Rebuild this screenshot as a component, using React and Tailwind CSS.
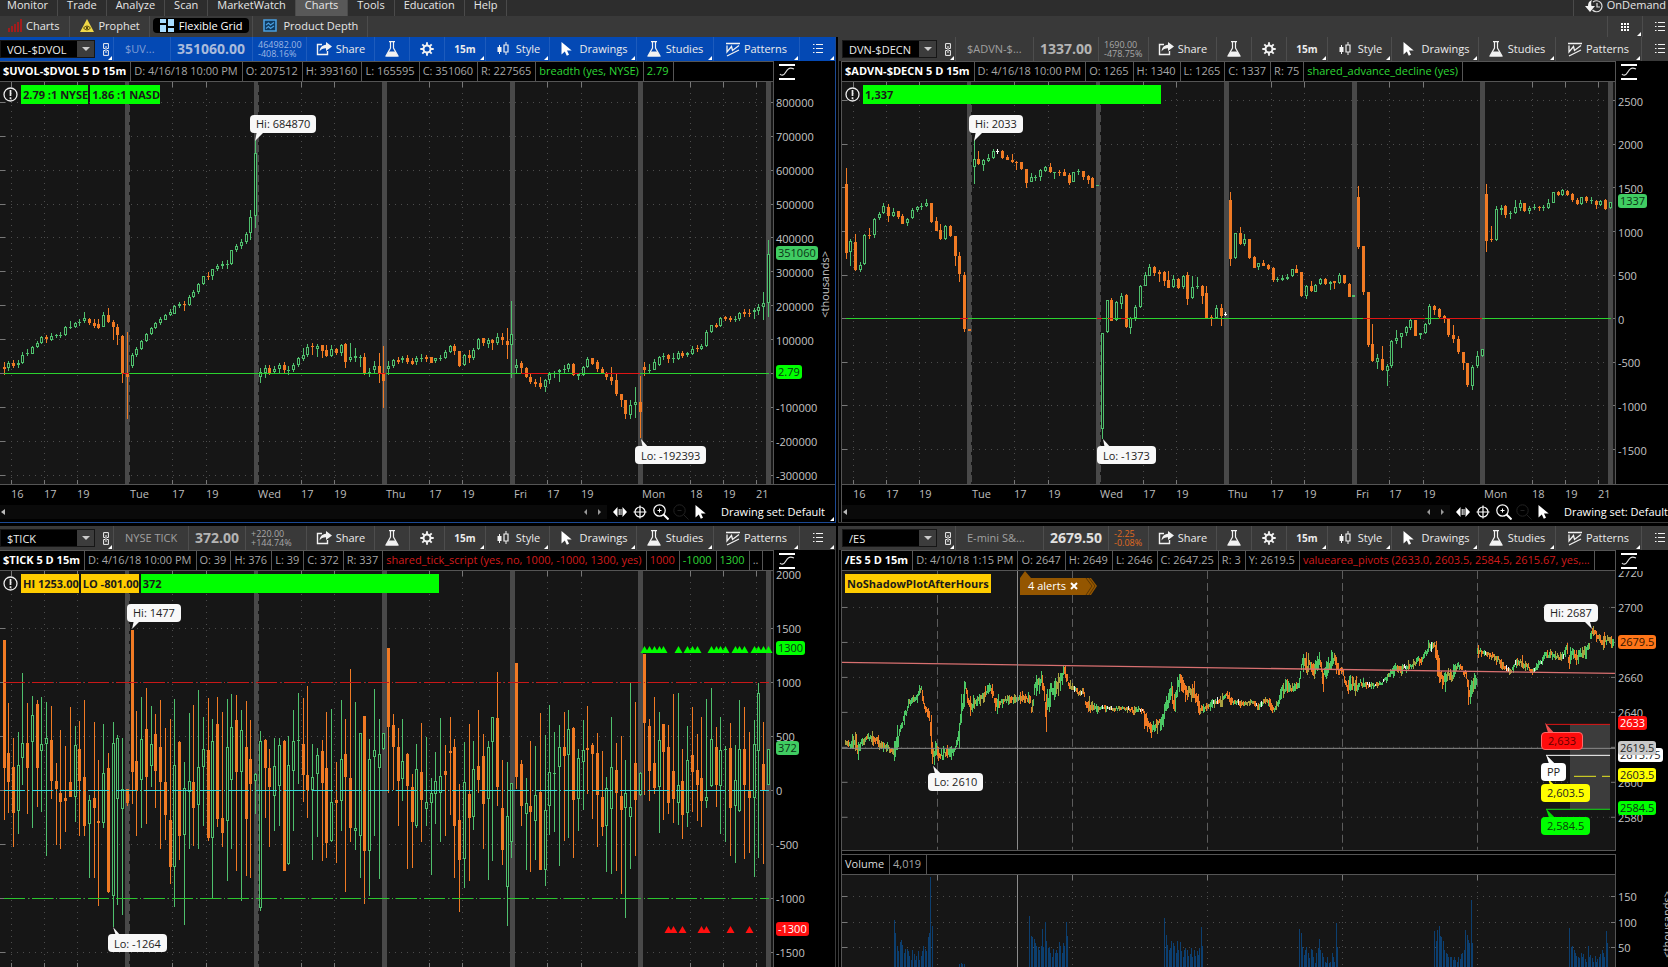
import React from 'react';

const UP = '#4fc06d';
const DOWN = '#f07a24';
const GRID = '#4c4c4c';
const CHART_W = 773;

/* ---------- Candle data ---------- */
// One candle per entry: direction, then high, body top, body bottom, low.
// Levels are measured downwards, three units to a pixel.

const UVOL = `
d 846 863 867 885,u 843 850 866 875,d 840 850 858 865,u 842 850 857 865,u 816 825 850 852,u 808 819 823 830,u 799 801 823 824,u 785 789 801 806,u 768 773 791 794,
d 766 773 779 790,u 760 768 780 783,u 762 766 768 776,u 757 766 768 775,u 738 741 766 770,u 723 741 743 749,u 726 730 743 746,u 717 726 730 738,u 697 716 724 729,
d 714 717 731 737,d 718 730 740 744,d 719 734 744 749,u 697 705 742 743,d 684 705 727 729,d 722 726 743 781,d 732 743 767 795,d 766 770 879 911,d 756 879 893 1017,
u 820 826 860 866,u 802 808 826 832,u 781 784 808 812,u 760 763 784 786,u 742 746 763 765,u 727 730 746 749,u 712 717 731 735,u 702 705 720 722,u 687 697 706 710,
u 677 680 702 704,u 667 673 680 686,d 663 673 677 695,u 647 651 677 678,u 631 636 653 656,u 610 613 637 644,u 588 590 613 617,d 578 588 591 602,u 567 569 590 600,
u 553 559 568 573,u 543 552 558 567,u 541 552 554 567,u 510 512 553 555,u 492 499 512 518,u 478 488 499 509,u 457 462 487 494,u 390 412 461 480,u 180 220 410 446,
u 866 878 893 911,u 855 864 880 894,d 855 865 880 887,u 860 868 878 882,u 849 856 868 880,d 847 856 872 880,u 858 870 872 886,u 850 856 870 876,u 832 836 856 863,
u 804 826 838 843,u 793 802 826 833,d 790 799 803 826,u 793 798 808 832,d 795 796 815 836,d 797 810 830 832,u 796 808 830 831,d 805 808 821 826,u 794 796 821 828,
d 790 792 846 866,u 789 832 842 848,u 804 830 834 846,u 825 831 833 861,d 820 831 879 887,u 866 876 880 893,u 843 858 870 880,d 820 858 880 911,d 798 880 905 984,
u 844 859 869 885,u 838 841 860 866,d 832 840 846 854,u 829 836 842 850,d 826 835 847 852,d 836 843 852 857,u 829 836 848 855,u 824 834 838 846,d 826 833 838 846,
d 832 833 849 851,u 835 836 845 851,u 826 836 838 845,u 811 817 835 837,u 796 799 817 819,d 793 799 815 826,d 814 814 858 861,u 824 826 857 860,d 811 826 834 849,
u 804 810 835 842,u 774 777 808 810,d 774 775 791 799,u 775 780 792 805,d 777 781 791 810,u 759 772 790 796,d 761 771 782 796,d 746 783 797 839,u 663 764 797 896,
u 838 856 866 880,d 845 851 866 880,d 863 866 893 895,d 879 893 908 914,d 898 908 912 923,d 891 911 923 927,u 898 902 922 938,u 876 882 902 914,u 875 880 883 896,
u 867 870 878 908,u 856 868 872 880,u 850 853 868 876,d 851 853 887 890,u 881 884 888 900,u 858 862 885 888,u 832 838 862 864,d 834 835 853 855,d 841 846 869 878,
d 861 868 879 881,d 876 880 891 902,d 862 891 903 917,d 882 901 943 950,d 942 942 962 981,d 960 961 1004 1019,u 962 977 1006 1019,u 922 966 976 1014,d 888 967 998 1076,
d 846 861 872 890,u 854 872 874 884,u 838 848 870 872,u 828 832 855 858,u 819 828 830 841,d 822 827 839 851,u 820 835 838 849,u 813 820 837 841,d 814 819 828 836,
u 816 820 827 832,u 799 807 822 825,d 797 806 808 818,u 793 799 807 811,u 751 757 800 803,u 735 737 757 759,d 730 735 741 744,u 711 714 740 741,d 708 713 717 724,
d 709 714 722 726,u 709 717 721 727,u 697 699 719 723,d 688 698 702 711,d 688 699 701 711,u 684 692 698 717,u 673 682 695 706,u 636 670 681 722,u 480 523 671 713`;

const ADVN = `
d 264 312 521 537,u 479 483 517 560,d 462 486 572 573,u 546 556 572 576,u 462 465 553 555,d 446 466 470 477,u 414 417 467 475,u 396 402 415 420,u 370 380 401 403,
d 372 381 410 426,u 384 396 409 411,d 393 395 413 417,d 402 410 432 434,u 414 417 431 438,u 384 390 415 417,u 380 382 392 396,u 369 378 383 390,u 357 369 380 381,
d 369 369 427 429,d 411 423 453 455,d 434 450 479 480,u 436 438 479 480,d 437 438 470 471,d 468 469 528 560,d 518 528 582 606,d 576 585 749 758,d 748 748 755 755,
u 180 238 263 312,d 213 237 254 255,u 238 240 257 275,u 222 234 243 246,u 209 213 235 237,w 207 214 216 223,d 210 215 236 237,d 225 231 240 242,d 223 240 248 250,
d 243 247 249 270,d 246 247 267 272,d 267 267 310 324,u 280 293 307 308,u 285 292 296 305,u 269 272 293 305,u 260 262 275 276,d 251 261 278 279,u 276 277 279 297,
d 270 277 279 288,d 268 276 288 290,d 280 285 309 315,u 276 277 308 308,u 267 273 277 287,d 273 274 293 302,d 287 289 302 312,d 293 296 324 325,u 315 316 320 320,
u 759 760 1049 1078,u 660 661 758 759,d 655 661 723 725,u 663 667 722 724,u 640 648 674 687,d 643 645 743 744,u 712 715 746 764,u 675 682 716 725,u 615 619 683 684,
u 578 587 618 620,u 552 562 588 590,d 560 562 580 590,d 570 578 582 608,d 573 578 603 620,d 573 600 624 625,u 585 598 623 626,d 596 598 624 628,u 585 588 623 627,
d 576 586 657 675,u 590 622 656 657,u 591 618 621 628,d 617 619 648 672,d 619 640 714 715,d 706 712 714 738,u 676 684 714 715,d 673 684 708 738,w 698 702 706 709,
d 336 360 537 560,u 459 460 536 537,d 441 460 494 495,u 462 479 493 498,d 477 479 534 537,d 530 531 564 565,u 549 551 563 570,d 540 550 558 560,d 552 557 567 570,
d 562 565 602 606,u 591 597 602 606,u 585 596 600 605,u 582 592 599 600,u 567 568 590 591,d 556 567 579 581,d 577 577 649 652,u 615 619 649 657,d 605 618 635 638,
u 613 615 636 638,u 594 598 614 615,d 594 597 612 615,u 604 606 612 630,d 603 605 610 627,u 579 586 610 612,d 585 586 611 612,d 611 612 651 651,u 645 645 651 651,
d 318 351 503 507,d 498 499 637 645,d 636 637 795 801,d 732 793 845 846,u 822 836 847 867,d 800 837 872 873,u 852 858 875 918,u 780 783 860 864,u 750 775 783 793,
u 759 760 772 804,u 738 741 760 768,u 718 720 744 750,d 720 721 768 770,u 759 760 767 777,u 730 733 760 762,u 672 679 733 736,d 675 679 692 705,d 684 688 712 714,
d 705 709 716 730,d 716 717 765 773,d 735 765 779 789,d 768 777 818 822,d 816 817 851 870,d 850 850 917 923,u 855 861 919 930,u 813 829 859 864,u 807 808 830 831,
d 312 342 483 518,d 438 477 479 486,u 378 388 482 483,u 376 384 392 405,d 375 380 405 414,u 393 399 404 417,u 360 382 401 402,u 361 370 385 394,d 370 371 395 396,
u 380 386 395 402,u 372 381 385 390,d 378 382 385 393,u 375 382 385 393,u 357 369 386 387,u 336 338 369 370,d 334 337 346 348,u 327 332 346 348,d 330 333 345 350,
d 340 342 362 366,d 354 360 372 375,u 351 353 373 375,d 348 352 365 369,u 351 362 365 372,d 360 363 375 387,u 360 364 375 378,d 359 361 387 390,u 366 368 385 387`;

const TICK = `
d 360 360 744 900,d 550 699 786 880,d 654 741 880 981,u 636 735 875 942,u 459 669 716 795,d 550 669 745 882,u 528 585 668 926,d 540 552 744 861,u 531 673 694 876,
u 546 655 673 1008,d 558 660 783 837,d 731 783 807 975,d 630 819 846 988,d 678 836 843 936,d 561 786 833 833,u 618 676 832 908,d 603 687 783 948,d 540 771 920 948,
u 825 840 913 1075,d 606 834 864 1075,d 720 903 911 1158,u 612 760 911 926,d 700 744 1117 1119,u 606 669 1130 1221,u 645 654 838 1157,u 654 808 868 1186,d 807 808 850 858,
d 330 330 758 852,d 573 723 815 950,u 531 658 782 925,d 504 627 773 912,u 558 673 738 803,d 582 643 753 864,d 540 681 788 988,d 625 786 885 960,d 597 900 1041 1092,
u 537 736 1043 1161,d 663 666 950 1020,u 726 804 947 1215,u 580 783 818 988,d 555 788 864 978,u 510 741 857 988,u 591 687 743 918,d 534 690 955 963,u 598 663 954 1137,
d 532 612 897 921,d 576 895 941 981,u 537 682 903 1083,u 522 622 782 988,d 525 600 756 1053,u 570 630 758 1143,d 543 682 897 1068,d 600 717 792 1075,u 760 763 785 882,
u 633 664 1166 1173,d 657 660 744 894,d 687 744 801 981,u 656 738 830 933,u 654 676 800 918,d 660 663 1053 1053,u 648 736 1033 1036,u 570 664 755 933,u 519 660 665 792,
d 534 672 765 846,d 498 765 812 894,u 673 773 811 1020,u 684 706 762 952,d 660 693 790 1023,d 576 744 969 1014,u 567 847 965 966,d 726 840 849 1031,u 540 718 845 933,
d 598 702 773 1116,d 447 774 924 966,u 546 925 935 990,u 640 640 948 1075,d 588 588 995 1152,u 658 718 995 1130,u 507 691 712 948,u 598 703 744 1078,u 640 640 688 692,
d 384 384 621 820,d 582 615 683 812,d 625 681 785 918,u 598 724 779 845,d 699 702 798 1047,d 762 803 906 1044,u 672 747 918 924,d 609 756 840 966,u 651 846 869 918,
u 774 819 849 1065,u 697 784 822 914,u 594 768 820 966,d 675 753 765 948,d 591 693 699 885,d 657 682 920 1075,d 792 900 1020 1176,u 666 786 1018 1104,d 612 822 894 1083,
u 663 747 893 930,d 570 738 782 820,d 643 708 854 987,u 663 682 838 1080,u 591 592 667 1023,d 456 594 801 858,d 720 864 990 1035,u 726 888 1103 1218,u 790 790 967 1014,
d 429 429 771 807,d 720 732 860 918,u 776 850 883 1050,d 663 858 876 1056,u 678 826 903 1020,d 579 816 1050 1050,u 645 870 1052 1098,u 555 757 860 945,u 636 760 764 936,
u 615 682 742 1038,d 576 682 708 963,u 570 628 706 954,d 621 624 840 1014,u 687 714 838 933,u 600 690 728 870,d 558 684 692 822,d 669 675 702 897,d 639 699 825 981,
d 693 831 921 948,u 771 804 919 1056,u 591 742 868 1062,d 669 750 820 1053,d 648 828 870 1122,u 720 820 865 1194,u 489 861 892 1047,d 546 729 840 1008,u 756 760 827 830,
d 402 404 609 825,d 597 618 753 843,d 531 729 804 822,u 576 661 803 939,d 612 612 696 900,d 615 682 849 882,d 522 753 837 909,u 519 796 850 915,d 687 783 887 957,
u 618 721 880 921,d 561 705 756 876,d 642 750 795 903,d 591 774 843 921,u 537 833 845 864,u 504 658 800 801,d 621 681 795 861,u 591 690 800 942,u 678 688 692 966,
d 609 684 866 1008,u 675 780 860 1029,u 540 688 875 876,d 561 687 795 1017,d 636 814 834 999,u 600 673 836 1071,u 489 520 695 1014,d 606 732 812 1032,u 687 687 796 797`;

// /ES path: x, mid level, range. Same units as the candles.
const ES_PATH = [
  [42, 670, 12], [60, 672, 18], [75, 660, 25], [82, 690, 30], [95, 665, 15], [120, 650, 18], [135, 660, 20], [150, 672, 14], [170, 682, 16],
  [185, 690, 16], [192, 692, 35], [198, 670, 50], [208, 645, 30], [220, 600, 25], [235, 555, 22], [245, 540, 22], [255, 545, 20], [265, 520, 22],
  [274, 512, 18], [282, 545, 30], [290, 575, 25], [297, 590, 35], [304, 640, 60], [306, 705, 40], [312, 700, 45], [320, 690, 18], [330, 710, 22],
  [345, 700, 20], [360, 702, 22], [375, 690, 14], [382, 665, 25], [388, 640, 40], [394, 570, 40], [400, 540, 30], [404, 505, 40], [410, 520, 25],
  [418, 555, 30], [424, 560, 30], [435, 545, 18], [450, 535, 18], [468, 520, 18], [480, 500, 12], [490, 525, 25], [498, 560, 28], [505, 545, 20],
  [520, 548, 12], [535, 535, 18], [550, 538, 14], [570, 530, 16], [590, 535, 14], [600, 540, 20], [606, 570, 30], [612, 520, 30], [620, 485, 30],
  [628, 490, 30], [635, 480, 40], [642, 500, 40], [648, 570, 70], [655, 540, 40], [665, 510, 30], [675, 495, 35], [690, 490, 30], [700, 455, 30],
  [708, 470, 25], [718, 495, 16], [730, 505, 10], [745, 518, 14], [760, 515, 12], [768, 550, 20], [780, 560, 22], [800, 565, 10], [830, 564, 8],
  [870, 566, 8], [900, 566, 8], [910, 575, 14], [925, 568, 8], [938, 572, 8], [946, 600, 40], [955, 615, 25], [965, 635, 20], [975, 615, 25],
  [985, 612, 18], [1000, 605, 20], [1008, 550, 40], [1016, 530, 30], [1024, 515, 25], [1032, 555, 35], [1040, 520, 30], [1048, 480, 25],
  [1056, 495, 25], [1070, 520, 30], [1085, 515, 30], [1098, 525, 35], [1106, 565, 30], [1120, 570, 14], [1132, 562, 14], [1150, 548, 12],
  [1165, 543, 10], [1175, 545, 22], [1187, 525, 14], [1200, 540, 14], [1220, 547, 14], [1240, 552, 8], [1265, 547, 8], [1285, 560, 10],
  [1300, 545, 14], [1315, 545, 14], [1330, 570, 14], [1345, 545, 18], [1355, 515, 25], [1370, 500, 20], [1385, 503, 16], [1400, 500, 14],
  [1408, 485, 25], [1416, 430, 30], [1422, 425, 25], [1432, 440, 35], [1442, 435, 20], [1452, 450, 25], [1462, 430, 25], [1470, 425, 30],
  [1480, 475, 35], [1490, 440, 28], [1500, 435, 30], [1512, 410, 25], [1520, 430, 25], [1528, 452, 12], [1537, 452, 8], [1543, 475, 20],
  [1553, 500, 25], [1565, 492, 20], [1578, 497, 25], [1590, 490, 16], [1610, 496, 12], [1630, 496, 8], [1650, 492, 8], [1670, 475, 12],
  [1690, 450, 16], [1698, 440, 18], [1708, 450, 16], [1725, 443, 12], [1745, 435, 14], [1765, 420, 14], [1780, 415, 18], [1795, 385, 18],
  [1808, 373, 10], [1816, 385, 25], [1822, 420, 40], [1830, 465, 40], [1838, 490, 30], [1848, 470, 30], [1856, 465, 30], [1866, 470, 25],
  [1876, 450, 20], [1888, 438, 14], [1898, 450, 18], [1906, 460, 18], [1912, 500, 40], [1918, 535, 35], [1924, 500, 30], [1935, 488, 20],
  [1941, 480, 14], [1942, 392, 28], [1955, 398, 10], [1970, 402, 10], [1990, 412, 12], [2005, 418, 12], [2016, 435, 14], [2030, 448, 12],
  [2045, 452, 10], [2060, 425, 14], [2080, 432, 18], [2095, 438, 14], [2107, 460, 14], [2115, 445, 12], [2130, 430, 10], [2147, 405, 12],
  [2165, 403, 12], [2185, 410, 12], [2200, 410, 12], [2210, 385, 22], [2218, 425, 35], [2230, 395, 25], [2240, 415, 22], [2250, 405, 20],
  [2265, 395, 20], [2278, 380, 18], [2283, 340, 25], [2295, 340, 14], [2305, 358, 18], [2320, 365, 22], [2335, 362, 20], [2345, 365, 16], [2353, 370, 12],
];

const VOLUME_SESSIONS = [
  { x: 192, tops: [1200, 1240, 1278, 1292, 1267, 1260, 1275, 1300, 1287, 1288, 1292, 1308, 1320, 1290, 1302, 1320, 1308, 1292, 1320, 1308, 1292, 1278, 1288, 1292, 1250, 1240, 1072, 1218] },
  { x: 388, tops: [1333, 1330, 1331, 1333] },
  { x: 598, tops: [1188, 1248, 1250, 1258, 1268, 1278, 1280, 1290, 1278, 1228, 1282, 1205, 1262, 1285, 1280, 1300, 1310, 1288, 1300, 1290, 1300, 1265, 1278, 1300, 1270, 1278, 1205, 1248] },
  { x: 1003, tops: [1194, 1245, 1275, 1290, 1285, 1262, 1270, 1278, 1300, 1262, 1290, 1265, 1292, 1310, 1290, 1285, 1290, 1308, 1302, 1285, 1310, 1290, 1308, 1292, 1305, 1285, 1222, 1278] },
  { x: 1408, tops: [1227, 1240, 1280, 1305, 1290, 1280, 1298, 1315, 1288, 1290, 1310, 1330, 1300, 1285, 1256, 1290, 1300, 1310, 1325, 1330, 1310, 1330, 1325, 1300, 1310, 1325, 1208, 1282] },
  { x: 1813, tops: [1233, 1262, 1230, 1218, 1248, 1250, 1262, 1290, 1298, 1302, 1310, 1312, 1310, 1320, 1312, 1320, 1325, 1310, 1318, 1302, 1300, 1290, 1230, 1245, 1260, 1270, 1141, 1268] },
  { x: 2218, tops: [1225, 1280, 1278, 1290, 1300, 1308, 1310, 1315, 1300, 1310, 1302, 1318, 1325, 1278, 1310, 1305, 1315, 1325, 1308, 1325, 1318, 1310, 1302, 1290, 1300, 1310, 1232, 1270] },
];

const TIMES = [
  [11, '16'], [44, '17'], [77, '19'], [130, 'Tue', true], [172, '17'], [206, '19'], [258, 'Wed', true], [301, '17'], [334, '19'],
  [386, 'Thu', true], [429, '17'], [462, '19'], [514, 'Fri', true], [547, '17'], [581, '19'], [642, 'Mon', true], [690, '18'], [723, '19'], [756, '21'],
];
const SESSION_BANDS = [125, 254, 382, 510, 638, 766];

/* ---------- Icons ---------- */

const Share = () => (
  <svg width="16" height="14" viewBox="0 0 16 14" aria-hidden="true">
    <path d="M6 2.5H1.5v10h10V9" fill="none" stroke="#f2f2f2" strokeWidth="1.4" />
    <path d="M10 0l6 4.5L10 9V6.3C7 6.3 5 7.2 3.6 9.6 3.8 5.6 6 3.1 10 2.8z" fill="#f2f2f2" />
  </svg>
);
const Flask = () => (
  <svg width="14" height="16" viewBox="0 0 14 16" aria-hidden="true">
    <path d="M4 .7h6M5.5 1v6L1 15h12L8.500 7V1" fill="none" stroke="#f2f2f2" strokeWidth="1.2" />
    <path d="M3.600 10.500h6.800L13 15.500H1z" fill="#f2f2f2" />
  </svg>
);
const Gear = () => (
  <svg width="14" height="14" viewBox="0 0 14 14" aria-hidden="true">
    <circle cx="7" cy="7" r="3.500" fill="none" stroke="#f2f2f2" strokeWidth="2" />
    <path d="M7 .3v3M7 10.700v3M.3 7h3M10.700 7h3M2.300 2.300l2 2M9.700 9.700l2 2M2.300 11.700l2-2M9.700 4.300l2-2" stroke="#f2f2f2" strokeWidth="1.900" />
  </svg>
);
const Candles = () => (
  <svg width="12" height="14" viewBox="0 0 12 14" aria-hidden="true">
    <path d="M2.500 3v9M9 0v3M9 10v3" stroke="#f2f2f2" strokeWidth="1" />
    <path d="M.5 5h4v5h-4z" fill="#f2f2f2" />
    <path d="M7 3h4v7H7z" fill="none" stroke="#f2f2f2" strokeWidth="1.200" />
  </svg>
);
const Cursor = () => (
  <svg width="12" height="14" viewBox="0 0 12 14" aria-hidden="true">
    <path d="M.5 0v12.500l3.300-3 2 4.300 2.200-1-2-4.200h4.700z" fill="#fff" />
  </svg>
);
const Patterns = () => (
  <svg width="14" height="15" viewBox="0 0 14 15" aria-hidden="true">
    <path d="M0 1.500h14M1 14L13 8M1 3.500V10l4.500-5.500 1 4L13 3.500" fill="none" stroke="#f2f2f2" strokeWidth="1.300" />
  </svg>
);
const List = () => (
  <svg width="10" height="10" viewBox="0 0 10 10" aria-hidden="true">
    <path d="M0 .5h1.500M0 4.500h1.500M0 8.500h1.500M3 .5h7M3 4.500h7M3 8.500h7" stroke="#f2f2f2" strokeWidth="1" />
  </svg>
);
const Chain = () => (
  <svg width="6" height="13" viewBox="0 0 6 13" aria-hidden="true">
    <path d="M.6 5.500V.6h4.800v4.900H4M.6 7.500v4.900h4.800V7.500H4M3 3v7M.6 5.500H2M.6 7.500H2" fill="none" stroke="#f2f2f2" strokeWidth="1" />
  </svg>
);
const Curve = () => (
  <svg width="16" height="16" viewBox="0 0 16 16" aria-hidden="true">
    <path d="M0 1h16M0 15h16" stroke="#fff" strokeWidth="2" />
    <path d="M1 10c1 1.500 3.500 2 5.500-1.500S10 3 15 5" fill="none" stroke="#ddd" strokeWidth="1.200" />
  </svg>
);
const Warning = () => (
  <svg className="size-[15px] shrink-0" viewBox="0 0 15 15" aria-hidden="true">
    <circle cx="7.500" cy="7.500" r="6.500" fill="none" stroke="#eee" strokeWidth="1.300" />
    <path d="M7.500 3v6M7.500 10.300v2" stroke="#eee" strokeWidth="1.700" />
  </svg>
);
const Corner = () => (
  <svg className="absolute bottom-px right-px size-1" viewBox="0 0 4 4" aria-hidden="true">
    <path d="M4 0v4H0z" fill="#fff" />
  </svg>
);

/* ---------- Top bars ---------- */

const MENUS = ['Monitor', 'Trade', 'Analyze', 'Scan', 'MarketWatch', 'Charts', 'Tools', 'Education', 'Help'];

function MenuBar() {
  return (
    <nav className="flex h-4 shrink-0 bg-[#2d2d2d] leading-[10px] text-[#e6e6e6]">
      {MENUS.map((m) => (
        <button
          key={m}
          className={`flex items-start border-r border-[#4a4a4a] px-[9px] first:pl-[7px] ${m === 'Charts' ? 'bg-[#585858]' : ''}`}
        >
          {m}
        </button>
      ))}
      <button className="ml-auto flex items-start gap-1 border-l border-[#4a4a4a] pl-[11px] pr-0.5">
        <svg width="18" height="13" viewBox="0 0 18 13" aria-hidden="true">
          <path d="M8 2a5.500 5.500 0 1 1-.5 8" fill="none" stroke="#ddd" strokeWidth="1.200" />
          <path d="M12 3v4h3" fill="none" stroke="#ddd" strokeWidth="1.200" />
          <path d="M0 6h3C3 3 4 1 7 0c-1 2-1 4-.5 6H10l-5 6z" fill="#f2f2f2" />
        </svg>
        OnDemand
      </button>
    </nav>
  );
}

function TabBar() {
  return (
    <nav className="flex h-[21px] shrink-0 items-center bg-[#393939] leading-[14px] text-[#e6e6e6]">
      <button className="flex h-full items-center gap-1 border-r border-[#4c4c4c] pb-0.5 pl-2 pr-[10px]">
        <svg width="14" height="13" viewBox="0 0 14 13" aria-hidden="true">
          <path d="M0 9h2v4H0zM3 7h2v6H3zM6 5h2v8H6zM9 3h2v10H9zM12 0h2v13h-2z" fill="#a01c1c" />
        </svg>
        Charts
      </button>
      <button className="flex h-full items-center gap-1 border-r border-[#4c4c4c] pb-0.5 pl-[10px] pr-[9px]">
        <svg width="14" height="13" viewBox="0 0 14 13" aria-hidden="true">
          <path d="M7 0l7 13H0z" fill="#f0d848" />
          <path d="M3.500 9c2-2.500 5-2.500 7 0-2 2.500-5 2.500-7 0z" fill="none" stroke="#55480a" />
          <circle cx="7" cy="9" r="1.200" fill="#55480a" />
        </svg>
        Prophet
      </button>
      <div className="flex h-full items-center border-r border-[#4c4c4c] px-[3px] pb-0.5">
        <button className="flex h-[15px] items-center gap-[5px] rounded bg-black px-[7px] text-white">
          <svg width="14" height="13" viewBox="0 0 14 13" aria-hidden="true">
            <path d="M0 0h6v4H0zM8 0h6v7H8zM0 6h6v7H0zM8 9h6v4H8z" fill="#a8dcff" />
          </svg>
          Flexible Grid
        </button>
      </div>
      <button className="flex h-full items-center gap-[6px] border-r border-[#4c4c4c] pb-0.5 pl-[10px] pr-[9px]">
        <svg width="14" height="13" viewBox="0 0 14 13" aria-hidden="true">
          <path d="M1 1h12v11H1z" fill="#0f3a60" stroke="#4a9fe0" strokeWidth="1.600" />
          <path d="M3 6l2.500-2 2 2L11 3.500M3 9.500l2.500-2 2 2L11 7" fill="none" stroke="#4a9fe0" strokeWidth="1.200" />
        </svg>
        Product Depth
      </button>
      <button className="relative ml-auto flex h-full w-[35px] items-center justify-center border-l border-[#4c4c4c]" aria-label="Layouts">
        <svg width="8" height="8" viewBox="0 0 8 8" aria-hidden="true">
          <path d="M0 0h2v2H0zM3 0h2v2H3zM6 0h2v2H6zM0 3h2v2H0zM3 3h2v2H3zM6 3h2v2H6zM0 6h2v2H0zM3 6h2v2H3zM6 6h2v2H6z" fill="#fff" />
        </svg>
        <Corner />
      </button>
      <button className="flex h-full w-[26px] items-center border-l border-[#4c4c4c] pl-3" aria-label="Menu">
        <List />
      </button>
    </nav>
  );
}

/* ---------- Chart panel chrome ---------- */

function Tool({ className, label, icon, text, corner = true }) {
  return (
    <button className={`relative flex h-full shrink-0 items-center justify-center border-l border-white/10 ${className}`} aria-label={label}>
      {icon}
      {text}
      {corner && <Corner />}
    </button>
  );
}

function Toolbar({ symbol, name, price, change, active, changeClass, priceClass, nameClass, inset }) {
  return (
    <div className={`flex h-6 shrink-0 items-center text-[#ececec] ${active ? 'bg-[#0449b4]' : 'bg-[#393939]'} ${inset ? 'pl-[3px]' : ''}`}>
      <div className="flex h-[18px] w-[95px] shrink-0 items-center border border-[#161616] bg-black">
        <input aria-label="Symbol" defaultValue={symbol} className="h-full w-[76px] min-w-0 bg-transparent pl-1.5 outline-none" />
        <button aria-label="Symbol list" className="flex h-full w-[17px] items-center justify-center bg-[#3c3c3c]">
          <svg width="8" height="4" viewBox="0 0 8 4" aria-hidden="true"><path d="M0 0h8L4 4z" fill="#ccc" /></svg>
        </button>
      </div>
      <button className="relative flex h-full w-[18px] shrink-0 items-center justify-center pl-[3px]" aria-label="Link">
        <Chain />
        <Corner />
      </button>
      <span className={`flex h-full flex-none items-center border-l border-white/10 pl-[11px] ${nameClass}`}>{name}</span>
      <span className={`flex h-full flex-none items-center border-l border-white/10 px-1.5 text-sm font-bold ${priceClass}`}>{price}</span>
      <span className={`flex h-full flex-none flex-col justify-center border-l border-white/10 pl-[5px] text-[9px] leading-[9px] ${changeClass}`}>
        <span>{change[0]}</span>
        <span>{change[1]}</span>
      </span>
      <Tool className="w-[68px] gap-1" icon={<Share />} text="Share" corner={false} />
      <Tool className="w-[35px]" label="Studies quick list" icon={<Flask />} corner={false} />
      <Tool className="w-[35px]" label="Settings" icon={<Gear />} corner={false} />
      <Tool className="w-[41px] text-[10px] font-bold" text="15m" />
      <Tool className="w-16 gap-[7px] pl-0.5" icon={<Candles />} text="Style" />
      <Tool className="w-[87px] gap-[7px] pl-0.5" icon={<Cursor />} text="Drawings" />
      <Tool className="w-[77px] gap-[5px]" icon={<Flask />} text="Studies" />
      <Tool className="w-[86px] gap-1" icon={<Patterns />} text="Patterns" />
      <Tool className="w-[36px]" label="Menu" icon={<List />} />
    </div>
  );
}

function DataRow({ title, cells, axisClass }) {
  return (
    <div className="flex h-[21px] shrink-0 bg-black">
      <div className="flex min-w-0 flex-1 overflow-hidden border-y border-[#555] leading-[14px] whitespace-nowrap text-[#a6a6a6]">
        <span className="flex shrink-0 items-center border-r border-[#555] pb-0.5 pl-[3px] pr-1 font-bold text-white">{title}</span>
        {cells.map(([text, color], i) => (
          <span key={i} className={`flex shrink-0 items-center border-r border-[#555] pb-0.5 pl-[3px] pr-1 ${color || ''}`}>{text}</span>
        ))}
      </div>
      <button className={`flex shrink-0 items-center border-l border-[#555] pl-[5px] ${axisClass}`} aria-label="Axis mode"><Curve /></button>
    </div>
  );
}

function TimeAxis() {
  return (
    <div className="relative h-[19px] shrink-0 bg-black text-[#bdbdbd]">
      {TIMES.map(([x, t]) => (
        <span key={x} className="absolute top-0 leading-[17px]" style={{ left: `${x}px` }}>{t}</span>
      ))}
    </div>
  );
}

function ControlRow({ corner, endClass }) {
  return (
    <div className={`relative flex h-[18px] shrink-0 items-center bg-black pb-0.5 leading-[14px] text-white ${endClass}`}>
      <div className="mr-[6px] flex h-[14px] flex-1 items-center justify-between bg-[#0a0a0a] px-px">
        <svg width="4" height="6" viewBox="0 0 4 6" aria-hidden="true"><path d="M4 0v6L0 3z" fill="#bbb" /></svg>
        <svg className="mr-1" width="18" height="6" viewBox="0 0 18 6" aria-hidden="true"><path d="M3 0v6L0 3zM14 0v6l3-3z" fill="#999" /></svg>
      </div>
      <button aria-label="Pan" className="w-5">
        <svg width="14" height="10" viewBox="0 0 14 10" aria-hidden="true">
          <path d="M4.500 0v10L0 5zM9.500 0v10L14 5z" fill="#fff" /><path d="M6.200 2v6M8 2v6" stroke="#fff" />
        </svg>
      </button>
      <button aria-label="Crosshair" className="w-5">
        <svg width="14" height="14" viewBox="0 0 14 14" aria-hidden="true">
          <circle cx="7" cy="7" r="5" fill="none" stroke="#fff" strokeWidth="1.200" /><path d="M7 .5v13M.5 7h13" stroke="#fff" strokeWidth="1.200" />
        </svg>
      </button>
      <button aria-label="Zoom in" className="w-5">
        <svg width="16" height="16" viewBox="0 0 16 16" aria-hidden="true">
          <circle cx="6.500" cy="6.500" r="5.700" fill="none" stroke="#fff" strokeWidth="1.200" />
          <path d="M10.500 10.500l5 5" stroke="#fff" strokeWidth="2" /><path d="M6.500 4.500v4M4.500 6.500h4" stroke="#fff" />
        </svg>
      </button>
      <button aria-label="Zoom out" className="w-5" disabled>
        <svg width="16" height="16" viewBox="0 0 16 16" aria-hidden="true">
          <circle cx="6.500" cy="6.500" r="5.700" fill="none" stroke="#222" /><path d="M10.500 10.500l5 5M4.500 6.500h4" stroke="#222" />
        </svg>
      </button>
      <button aria-label="Pointer" className="w-7 pl-0.5"><Cursor /></button>
      <button className="shrink-0">Drawing set: Default</button>
      {corner && <Corner />}
    </div>
  );
}

/* ---------- Chart drawing ---------- */

function Grid({ height, rows, columns, bands }) {
  return (
    <g shapeRendering="crispEdges">
      {columns.map((x) => (
        <g key={x} stroke={GRID}>
          <path d={`M${x + 0.5} 5V${height}`} strokeDasharray="1 5" />
          <path d={`M${x + 0.5} 0V5M${x + 0.5} ${height - 4}V${height}`} stroke="#777" />
        </g>
      ))}
      {rows.map((y) => (
        <g key={y} stroke={GRID}>
          <path d={`M5 ${Math.floor(y) + 0.5}H${CHART_W}`} strokeDasharray="1 5" />
          <path d={`M0 ${Math.floor(y) + 0.5}h5M${CHART_W - 4} ${Math.floor(y) + 0.5}h4`} stroke="#777" />
        </g>
      ))}
      {bands.map((x, i) => (
        <g key={x}>
          <path d={`M${x} 0h5v${height}h-5z`} fill="#494949" />
          {i < 2 && <path d={`M${x + 4.5} 0V${height}`} stroke="#161616" strokeDasharray="3 7" />}
        </g>
      ))}
    </g>
  );
}

const candleX = (i) => Math.floor(4 + 4.747 * i);

function CandleSeries({ data, origin }) {
  const y = (v) => Math.floor((v - origin) / 3);
  return (
    <g shapeRendering="crispEdges">
      {data.trim().split(',').map((row, i) => {
        const [dir, ...levels] = row.trim().split(' ');
        const [high, top, bottom, low] = levels.map((v) => y(Number(v)));
        const x = candleX(i);
        const color = dir === 'u' ? UP : dir === 'd' ? DOWN : '#fff';
        const h = Math.max(1, bottom - top);
        return (
          <g key={i} fill={color}>
            <rect x={x} y={high} width="1" height={Math.max(1, low - high)} />
            <rect x={x - 1} y={top} width="3" height={h} />
            {dir === 'u' && h > 2 && <rect x={x} y={top + 1} width="1" height={h - 2} fill="#161616" />}
          </g>
        );
      })}
    </g>
  );
}

function Plot({ height, children }) {
  return (
    <svg className="absolute inset-0 size-full" viewBox={`0 0 ${CHART_W} ${height}`} preserveAspectRatio="none" aria-hidden="true">
      {children}
    </svg>
  );
}

// A note box on the plot; x and y are its top left corner.
function Note({ x, y, height, children, className = 'bg-[#f8f8f8] text-[#222]' }) {
  return (
    <span
      className={`absolute flex h-[18px] items-center rounded px-1.5 pt-px whitespace-nowrap ${className}`}
      style={{ left: `${(x / CHART_W) * 100}%`, top: `${(y / height) * 100}%` }}
    >
      {children}
    </span>
  );
}

function PriceAxis({ labels, scale, height, badges = [], unit, unitTop, className }) {
  const at = (y) => ({ top: `${(y / height) * 100}%` });
  return (
    <div className={`relative shrink-0 overflow-hidden border-l border-[#555] bg-black text-[#c4c4c4] ${className}`}>
      {labels.map((v) => (
        <span key={v} className="absolute left-[2px] -translate-y-1/2 pt-0.5 leading-4" style={at(scale(v))}>{v}</span>
      ))}
      {badges.map(([text, y, color]) => (
        <span key={text} className={`absolute left-[2px] flex h-[14px] -translate-y-1/2 items-center rounded-[3px] px-0.5 ${color}`} style={at(y)}>{text}</span>
      ))}
      {unit && (
        <span className="absolute left-[43px] rotate-180 leading-4 [writing-mode:vertical-rl]" style={at(unitTop)}>{unit}</span>
      )}
    </div>
  );
}

const Flag = ({ className = '', children }) => (
  <span className={`flex h-[19px] items-center pl-0.5 font-bold whitespace-nowrap text-[#1a1a1a] ${className}`}>{children}</span>
);

const minorTimes = TIMES.filter((t) => !t[2]).map((t) => t[0]);

/* ---------- Panels ---------- */

function UvolPanel() {
  const H = 402;
  const scale = (v) => 291.5 - (v / 100000) * 33.9;
  const labels = [800000, 700000, 600000, 500000, 400000, 300000, 200000, 100000, -100000, -200000, -300000];
  return (
    <section className="flex min-h-0 min-w-0 flex-col overflow-hidden border-r border-b border-[#1c4a94]">
      <Toolbar active symbol="VOL-$DVOL" name="$UV..." price="351060.00" change={['464982.00', '-408.16%']} nameClass="w-[57px] text-[#7f9fd6]" priceClass="w-[82px] text-[#a9bbdc]" changeClass="w-[54px] text-[#9db6e4]" />
      <DataRow
        title="$UVOL-$DVOL 5 D 15m"
        axisClass="w-[62px]"
        cells={[['D: 4/16/18 10:00 PM'], ['O: 207512'], ['H: 393160'], ['L: 165595'], ['C: 351060'], ['R: 227565'], ['breadth (yes, NYSE)', 'text-[#2fd636]'], ['2.79', 'text-[#2fd636]']]}
      />
      <div className="flex min-h-0 flex-1 border-b border-[#555]">
        <div className="relative flex-1 bg-[#161616]">
          <Plot height={H}>
            <Grid height={H} rows={[...labels, 0].map(scale)} columns={minorTimes} bands={SESSION_BANDS} />
            <CandleSeries data={UVOL} origin={6} />
            <g shapeRendering="crispEdges" fill="none">
              <path d="M4 291.500H769" stroke="#2bd22f" />
              <path d="M122 291.500h7M378 291.500h8M521 291.500h27M573 291.500h6M605 291.500h35" stroke="#e01414" />
            </g>
            <path d="M255 59l2-10h8z" fill="#f8f8f8" />
            <path d="M641 357l2 10h7z" fill="#f8f8f8" />
          </Plot>
          <div className="relative flex items-center gap-0.5 pl-[3px] pt-[3px]">
            <Warning />
            <Flag className="ml-px bg-[#00ff00]">2.79 :1 NYSE</Flag>
            <Flag className="bg-[#00ff00]">1.86 :1 NASD</Flag>
          </div>
          <Note x={250} y={33} height={H}>Hi: 684870</Note>
          <Note x={635} y={364} height={H}>Lo: -192393</Note>
        </div>
        <PriceAxis
          className="w-[62px]" labels={labels} scale={scale} height={H} unit="<thousands>" unitTop={169}
          badges={[['351060', 171, 'bg-[#40cc62] text-[#0c3316]'], ['2.79', 290, 'bg-[#00ff00] text-[#0c3316]']]}
        />
      </div>
      <TimeAxis />
      <ControlRow corner endClass="pr-[10px]" />
    </section>
  );
}

function AdvnPanel() {
  const H = 402;
  const scale = (v) => 236.7 - v * 0.0872;
  const labels = [2500, 2000, 1500, 1000, 500, 0, -500, -1000, -1500];
  return (
    <section className="flex min-h-0 min-w-0 flex-col overflow-hidden border-b border-l border-[#3a3a3a]">
      <Toolbar inset symbol="DVN-$DECN" name="$ADVN-$..." price="1337.00" change={['1690.00', '-478.75%']} nameClass="w-[78px] text-[#a0a0a0]" priceClass="w-[65px] text-[#b4b4b4]" changeClass="w-[50px] text-[#a8a8a8]" />
      <div className="flex min-h-0 flex-1 flex-col pl-[2px]">
        <div className="flex min-h-0 flex-1 flex-col border-l border-[#555]">
          <DataRow
            title="$ADVN-$DECN 5 D 15m"
            axisClass="w-[53px]"
            cells={[['D: 4/16/18 10:00 PM'], ['O: 1265'], ['H: 1340'], ['L: 1265'], ['C: 1337'], ['R: 75'], ['shared_advance_decline (yes)', 'text-[#2fd636]']]}
          />
          <div className="flex min-h-0 flex-1 border-b border-[#555]">
            <div className="relative flex-1 bg-[#161616]">
              <Plot height={H}>
                <Grid height={H} rows={labels.map(scale)} columns={minorTimes} bands={SESSION_BANDS} />
                <CandleSeries data={ADVN} origin={6} />
                <g shapeRendering="crispEdges" fill="none">
                  <path d="M4 236.500H769" stroke="#2bd22f" />
                  <path d="M118 236.500h8M255 236.500h5M266 236.500h5M279 236.500h6M521 236.500h62M597 236.500h43" stroke="#e01414" />
                </g>
                <path d="M132 59l2-10h8z" fill="#f8f8f8" />
                <path d="M261 357l2 10h7z" fill="#f8f8f8" />
              </Plot>
              <div className="relative flex items-center gap-0.5 pl-[3px] pt-[3px]">
                <Warning />
                <Flag className="ml-px w-[298px] bg-[#00ff00]">1,337</Flag>
              </div>
              <Note x={127} y={33} height={H}>Hi: 2033</Note>
              <Note x={255} y={364} height={H}>Lo: -1373</Note>
            </div>
            <PriceAxis className="w-[53px]" labels={labels} scale={scale} height={H} badges={[['1337', 119, 'bg-[#40cc62] text-[#0c3316]']]} />
          </div>
          <TimeAxis />
          <ControlRow endClass="" />
        </div>
      </div>
    </section>
  );
}

const HIGH_TICKS = [135, 136, 137, 138, 139, 142, 144, 145, 146, 149, 150, 151, 152, 154, 155, 156, 158, 159, 160, 161];
const LOW_TICKS = [140, 141, 143, 147, 148, 153, 157];

function TickPanel() {
  const H = 396;
  const scale = (v) => 219.3 - v * 0.108;
  const labels = [2000, 1500, 1000, 500, 0, -500, -1000, -1500];
  return (
    <section className="flex min-h-0 min-w-0 flex-col overflow-hidden border-r border-[#3a3a3a]">
      <Toolbar symbol="$TICK" name="NYSE TICK" price="372.00" change={['+220.00', '+144.74%']} nameClass="w-[75px] text-[#a0a0a0]" priceClass="w-[57px] text-[#b4b4b4]" changeClass="w-[61px] text-[#a8a8a8]" />
      <DataRow
        title="$TICK 5 D 15m"
        axisClass="w-[62px]"
        cells={[['D: 4/16/18 10:00 PM'], ['O: 39'], ['H: 376'], ['L: 39'], ['C: 372'], ['R: 337'], ['shared_tick_script (yes, no, 1000, -1000, 1300, yes)', 'text-[#d01c1c]'], ['1000', 'text-[#d01c1c]'], ['-1000', 'text-[#2fd636]'], ['1300', 'text-[#2fd636]'], ['..']]}
      />
      <div className="flex min-h-0 flex-1">
        <div className="relative flex-1 bg-[#161616]">
          <Plot height={H}>
            <Grid height={H} rows={labels.slice(1).map(scale)} columns={minorTimes} bands={SESSION_BANDS} />
            <CandleSeries data={TICK} origin={153} />
            <g fill="none" strokeDasharray="21 3 1 3">
              <path d="M4 111.500H769" stroke="#c81818" />
              <path d="M4 219.500H769" stroke="#2fd6dc" />
              <path d="M4 327.500H769" stroke="#2bc52f" />
            </g>
            {HIGH_TICKS.map((i) => <path key={i} d={`M${candleX(i) + 0.5} 75l4 7h-8z`} fill="#00ff00" />)}
            {LOW_TICKS.map((i) => <path key={i} d={`M${candleX(i) + 0.5} 355l4 7h-8z`} fill="#ff1010" />)}
            <path d="M132 58l2-9h7z" fill="#f8f8f8" />
            <path d="M113 356l3 9h5z" fill="#f8f8f8" />
          </Plot>
          <div className="relative flex items-center gap-0.5 pl-[3px] pt-[3px]">
            <Warning />
            <Flag className="ml-px bg-[#ffcc00]">HI 1253.00</Flag>
            <Flag className="bg-[#ffcc00]">LO -801.00</Flag>
            <Flag className="w-[298px] bg-[#00ff00]">372</Flag>
          </div>
          <Note x={127} y={33} height={H}>Hi: 1477</Note>
          <Note x={108} y={363} height={H}>Lo: -1264</Note>
        </div>
        <PriceAxis
          className="w-[62px]" labels={labels} scale={scale} height={H}
          badges={[['1300', 77, 'bg-[#00ff00] text-[#0c3316]'], ['372', 177, 'bg-[#40cc62] text-[#0c3316]'], ['-1300', 358, 'bg-[#ff1010] text-white']]}
        />
      </div>
    </section>
  );
}

// Steady noise, so that the bars are the same on each render
const noise = (n) => {
  const s = Math.sin(n * 12.9898) * 43758.5453;
  return s - Math.floor(s);
};

function esBars() {
  const bars = [];
  let k = 0;
  let prev = ES_PATH[0][1];
  for (let px = 3; px < 772; px++) {
    const u = px * 3 + 37;
    while (k < ES_PATH.length - 2 && ES_PATH[k + 1][0] <= u) k++;
    const [x0, m0, r0] = ES_PATH[k];
    const [x1, m1, r1] = ES_PATH[k + 1];
    const t = Math.min(1, (u - x0) / (x1 - x0));
    const mid = m0 + (m1 - m0) * t;
    const base = r0 + (r1 - r0) * t;
    const range = base * (0.5 + noise(px) ** 2 * 1.6);
    const centre = mid + (noise(px + 900) - 0.5) * base * 0.8;
    const drift = (prev - mid) / 8 + noise(px + 400) - 0.5;
    let color = drift > 0 ? '#4cc765' : DOWN;
    if (Math.abs(drift) < 0.16) color = '#a8a040';
    if (base < 13 && noise(px + 70) > 0.88) color = '#eee';
    bars.push({ x: px, y: (centre - range / 2 - 153) / 3 - 0.5, h: Math.max(2, range / 3 + 1), color });
    prev = mid;
  }
  return bars;
}

function EsPanel() {
  const H = 279;
  const VH = 92;
  const scale = (v) => 36.3 + (2700 - v) * 1.75;
  const volScale = (v) => 98 - v * 0.51;
  const days = [95, 230, 365, 500, 635];
  const volumeRows = [150, 100, 50];
  return (
    <section className="flex min-h-0 min-w-0 flex-col overflow-hidden border-l border-[#3a3a3a]">
      <Toolbar inset symbol="/ES" name="E-mini S&..." price="2679.50" change={['-2.25', '-0.08%']} nameClass="w-[88px] text-[#a0a0a0]" priceClass="w-[65px] text-[#e0e0e0]" changeClass="w-[40px] text-[#e06a20]" />
      <div className="flex min-h-0 flex-1 flex-col pl-[2px]">
        <div className="flex min-h-0 flex-1 flex-col border-l border-[#555]">
          <DataRow
            title="/ES 5 D 15m"
            axisClass="w-[53px]"
            cells={[['D: 4/10/18 1:15 PM'], ['O: 2647'], ['H: 2649'], ['L: 2646'], ['C: 2647.25'], ['R: 3'], ['Y: 2619.5'], ['valuearea_pivots (2633.0, 2603.5, 2584.5, 2615.67, yes,...', 'text-[#d01c1c]']]}
          />
          <div className="flex min-h-0 flex-[279]">
            <div className="relative flex-1 border-b border-[#555] bg-[#161616]">
              <Plot height={H}>
                <Grid height={H} rows={[2700, 2680, 2660, 2640, 2620, 2600, 2580].map(scale)} columns={[]} bands={[]} />
                <g shapeRendering="crispEdges" fill="none">
                  {days.map((x) => <path key={x} d={`M${x + 0.5} 0V${H}`} stroke="#5c5c5c" strokeDasharray="8 4" />)}
                  <path d="M728 153h40v85h-40z" fill="#3c3c3c" />
                  {esBars().map((b) => <rect key={b.x} x={b.x} y={Math.round(b.y)} width="1" height={Math.round(b.h)} fill={b.color} />)}
                </g>
                <path d="M0 91.500L773 102.500" stroke="#d87070" strokeWidth="1.300" />
                <g shapeRendering="crispEdges">
                  <path d="M175.500 0V279M0 177.500H773" stroke="#8c8c8c" />
                  <path d="M704 153.500h64" stroke="#e01414" />
                  <path d="M704 184.500h64" stroke="#fff" />
                  <path d="M732 205.500h22M760 205.500h8" stroke="#e8e820" />
                  <path d="M704 238.500h64" stroke="#18e018" />
                </g>
                <path d="M91 195l2 8h6z" fill="#f8f8f8" />
                <path d="M750 58l-7-7h5z" fill="#f8f8f8" />
                <path d="M703 152l3 10h6z" fill="#f05050" />
                <path d="M704 184l3 9h6z" fill="#fff" />
                <path d="M706 208l2 6h4z" fill="#ff0" />
                <path d="M704 238l3 9h6z" fill="#00e000" />
              </Plot>
              <div className="relative flex items-start gap-[29px] pl-[3px] pt-[3px]">
                <Flag className="w-[146px] bg-[#ffcc00]">NoShadowPlotAfterHours</Flag>
                <button className="relative mt-[3px] flex h-[17px] w-[77px] items-center gap-1 pl-2 whitespace-nowrap text-white">
                  <svg className="absolute left-0 top-[-6px] h-6 w-[77px]" viewBox="0 0 77 24" aria-hidden="true">
                    <path d="M0 24V7l5-7 6 7h60l6 8-6 9z" fill="#945600" />
                    <path d="M66 7l6 8-6 9M69 7l6 8-6 9" fill="none" stroke="#5c3600" />
                  </svg>
                  <span className="relative">4 alerts</span>
                  <svg className="relative" width="8" height="8" viewBox="0 0 8 8" aria-hidden="true"><path d="M1 1l6 6M7 1L1 7" stroke="#fff" strokeWidth="2" /></svg>
                </button>
              </div>
              <Note x={86} y={202} height={H}>Lo: 2610</Note>
              <Note x={702} y={33} height={H}>Hi: 2687</Note>
              <Note x={699} y={161} height={H} className="border border-[#ff6a6a] bg-[#ff0c0c] text-[#600]">2,633</Note>
              <Note x={699} y={192} height={H} className="bg-white text-[#222]">PP</Note>
              <Note x={699} y={213} height={H} className="bg-[#ffff00] text-[#222]">2,603.5</Note>
              <Note x={699} y={246} height={H} className="bg-[#00ff00] text-[#0a400a]">2,584.5</Note>
            </div>
            <PriceAxis
              className="w-[53px]" labels={[2720, 2700, 2660, 2640, 2600, 2580]} scale={scale} height={280}
              badges={[
                ['2679.5', 71, 'bg-[#ff7518] text-[#331400]'], ['2633', 152, 'bg-[#ff0c0c] text-white'], ['2615.75', 184, 'bg-white text-[#222]'],
                ['2619.5', 177, 'bg-[#c8c8c8] text-[#222]'], ['2603.5', 204, 'bg-[#ffff00] text-[#222]'], ['2584.5', 237, 'bg-[#00ff00] text-[#0c3316]'],
              ]}
            />
          </div>
          <div className="flex h-6 shrink-0 bg-black pt-[3px]">
            <div className="flex flex-1 border-y border-[#555]">
              <span className="flex items-center border-r border-[#555] pl-[3px] pr-[5px] text-[#dcdcdc]">Volume</span>
              <span className="flex items-center border-r border-[#555] pl-[3px] pr-[5px] text-[#a6a6a6]">4,019</span>
            </div>
            <div className="w-[53px] border-l border-[#555]" />
          </div>
          <div className="flex min-h-0 flex-[92]">
            <div className="relative flex-1 bg-[#161616]">
              <Plot height={VH}>
                <Grid height={VH + 6} rows={volumeRows.map(volScale)} columns={days} bands={[]} />
                <g shapeRendering="crispEdges" fill="#0c3f70">
                  {VOLUME_SESSIONS.map((s) => s.tops.map((top, i) => {
                    const x = Math.round((s.x - 36 + i * 4.2) / 3);
                    return <rect key={`${s.x}-${i}`} x={x} y={Math.round((top - 1065) / 3)} width="1" height={VH} />;
                  }))}
                </g>
                <path d="M175.500 0V92" stroke="#8c8c8c" shapeRendering="crispEdges" />
              </Plot>
            </div>
            <PriceAxis className="w-[53px]" labels={volumeRows} scale={volScale} height={VH} unit="<thousands>" unitTop={16} />
          </div>
        </div>
      </div>
    </section>
  );
}

export default function App() {
  return (
    <div className="flex h-screen flex-col overflow-hidden bg-black font-['Open_Sans',sans-serif] text-[11px] leading-4">
      <MenuBar />
      <TabBar />
      <main className="grid min-h-0 flex-1 grid-cols-[836fr_830fr] grid-rows-[486fr_441fr] gap-x-[2px] gap-y-[3px]">
        <UvolPanel />
        <AdvnPanel />
        <TickPanel />
        <EsPanel />
      </main>
    </div>
  );
}
